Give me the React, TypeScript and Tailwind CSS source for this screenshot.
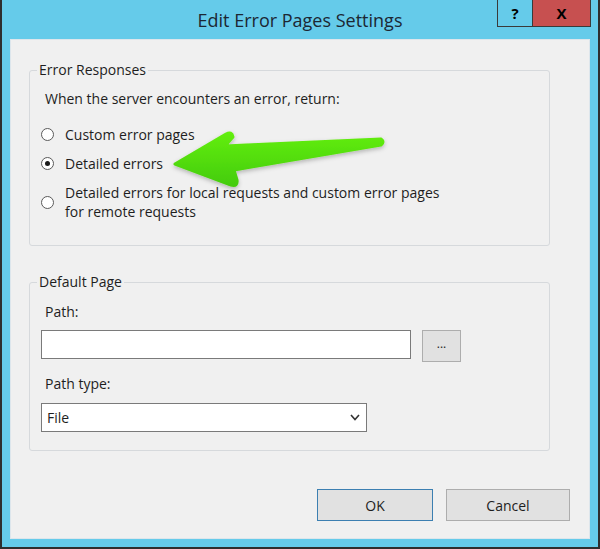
import { ReactNode } from "react";

const FONT = "font-['Open_Sans','Noto_Sans',sans-serif]";

function Radio({ checked, children }: { checked?: boolean; children: ReactNode }) {
  return (
    <div className="flex items-center gap-[11px] pl-[11px] leading-[19px]">
      <span className="flex h-[13px] w-[13px] shrink-0 items-center justify-center rounded-full border border-[#5a5a5a] bg-white">
        {checked && <span className="h-[5px] w-[5px] rounded-full bg-[#1a1a1a]" />}
      </span>
      <span>{children}</span>
    </div>
  );
}

function Arrow() {
  return (
    <svg
      className="pointer-events-none absolute left-0 top-0"
      width="600"
      height="549"
      viewBox="0 0 600 549"
    >
      <defs>
        <linearGradient id="g" x1="0" y1="0" x2="0" y2="1">
          <stop offset="0" stopColor="#62ee0c" />
          <stop offset="1" stopColor="#44cc08" />
        </linearGradient>
        <filter id="s" x="-10%" y="-30%" width="130%" height="160%">
          <feDropShadow dx="0" dy="2" stdDeviation="2" floodColor="#000" floodOpacity="0.25" />
        </filter>
      </defs>
      <path
        d="M175 164 L226 134 Q232 131 233 137 L225 146 L381 139 Q385 142 381 145 L234 170 L237 180 Q238 187 231 185 Z"
        fill="url(#g)"
        stroke="url(#g)"
        strokeWidth="3"
        strokeLinejoin="round"
        filter="url(#s)"
      />
    </svg>
  );
}

export default function App() {
  return (
    <div className={`relative h-[549px] w-[600px] bg-[#2e2e2e] px-[2px] pb-[2px] text-[14px] text-[#1e1e1e] ${FONT}`}>
      <div className="flex h-full flex-col bg-[#65cbea]">
        {/* title bar */}
        <div className="grid h-[39px] shrink-0 grid-cols-[1fr_auto_1fr]">
          <div />
          <div className="pt-[7px] text-[18px] leading-[26px] text-[#1c2733]">Edit Error Pages Settings</div>
          <div className="flex justify-end pr-[7px]">
            <div className="flex h-[27px] border border-t-0 border-[#3a3a3a]">
              <div className="flex w-[35px] items-center justify-center border-r border-[#3a3a3a] text-[15px] font-bold leading-none text-black">
                ?
              </div>
              <div className="flex w-[57px] items-center justify-center bg-[#c75050] text-[15px] font-bold leading-none text-black">
                X
              </div>
            </div>
          </div>
        </div>

        {/* content */}
        <div className="mx-[8px] mb-[8px] flex flex-1 flex-col border border-[#dde6ec] bg-[#f0f0f0] pl-[18px] pr-[39px] pt-[21px]">
          <fieldset className="rounded-[3px] border border-[#d6d9dc] pb-[24px]">
            <legend className="ml-[7px] px-[2px] leading-[18px]">Error Responses</legend>
            <div className="mt-[10px] pl-[15px] leading-[19px]">When the server encounters an error, return:</div>
            <div className="mt-[17px]">
              <Radio>Custom error pages</Radio>
            </div>
            <div className="mt-[10px]">
              <Radio checked>Detailed errors</Radio>
            </div>
            <div className="mt-[10px]">
              <Radio>
                Detailed errors for local requests and custom error pages
                <br />
                for remote requests
              </Radio>
            </div>
          </fieldset>

          <fieldset className="mt-[27px] rounded-[3px] border border-[#d6d9dc] pb-[18px] pl-[11px]">
            <legend className="-ml-[4px] px-[2px] leading-[18px]">Default Page</legend>
            <div className="mt-[11px] pl-[4px] leading-[19px]">Path:</div>
            <div className="mt-[9px] flex items-start gap-[11px]">
              <div className="h-[29px] w-[370px] border border-[#7a7a7a] bg-white" />
              <div className="flex h-[32px] w-[39px] items-center justify-center border border-[#adadad] bg-[#e1e1e1] pb-[4px] text-[12px] leading-none">
                ...
              </div>
            </div>
            <div className="mt-[12px] pl-[4px] leading-[19px]">Path type:</div>
            <div className="mt-[10px] flex h-[29px] w-[326px] items-center justify-between border border-[#7a7a7a] bg-white pl-[5px] pr-[6px]">
              <span className="leading-[19px]">File</span>
              <svg width="10" height="7" viewBox="0 0 10 7">
                <polyline points="1,1 5,5.5 9,1" fill="none" stroke="#333" strokeWidth="1.6" />
              </svg>
            </div>
          </fieldset>

          <div className="-mr-[20px] mt-[38px] flex justify-end gap-[13px]">
            <div className="flex h-[32px] w-[116px] items-center justify-center border border-[#3c7fb1] bg-[#e1e1e1]">OK</div>
            <div className="flex h-[32px] w-[124px] items-center justify-center border border-[#adadad] bg-[#e1e1e1]">
              Cancel
            </div>
          </div>
        </div>
      </div>
      <Arrow />
    </div>
  );
}
